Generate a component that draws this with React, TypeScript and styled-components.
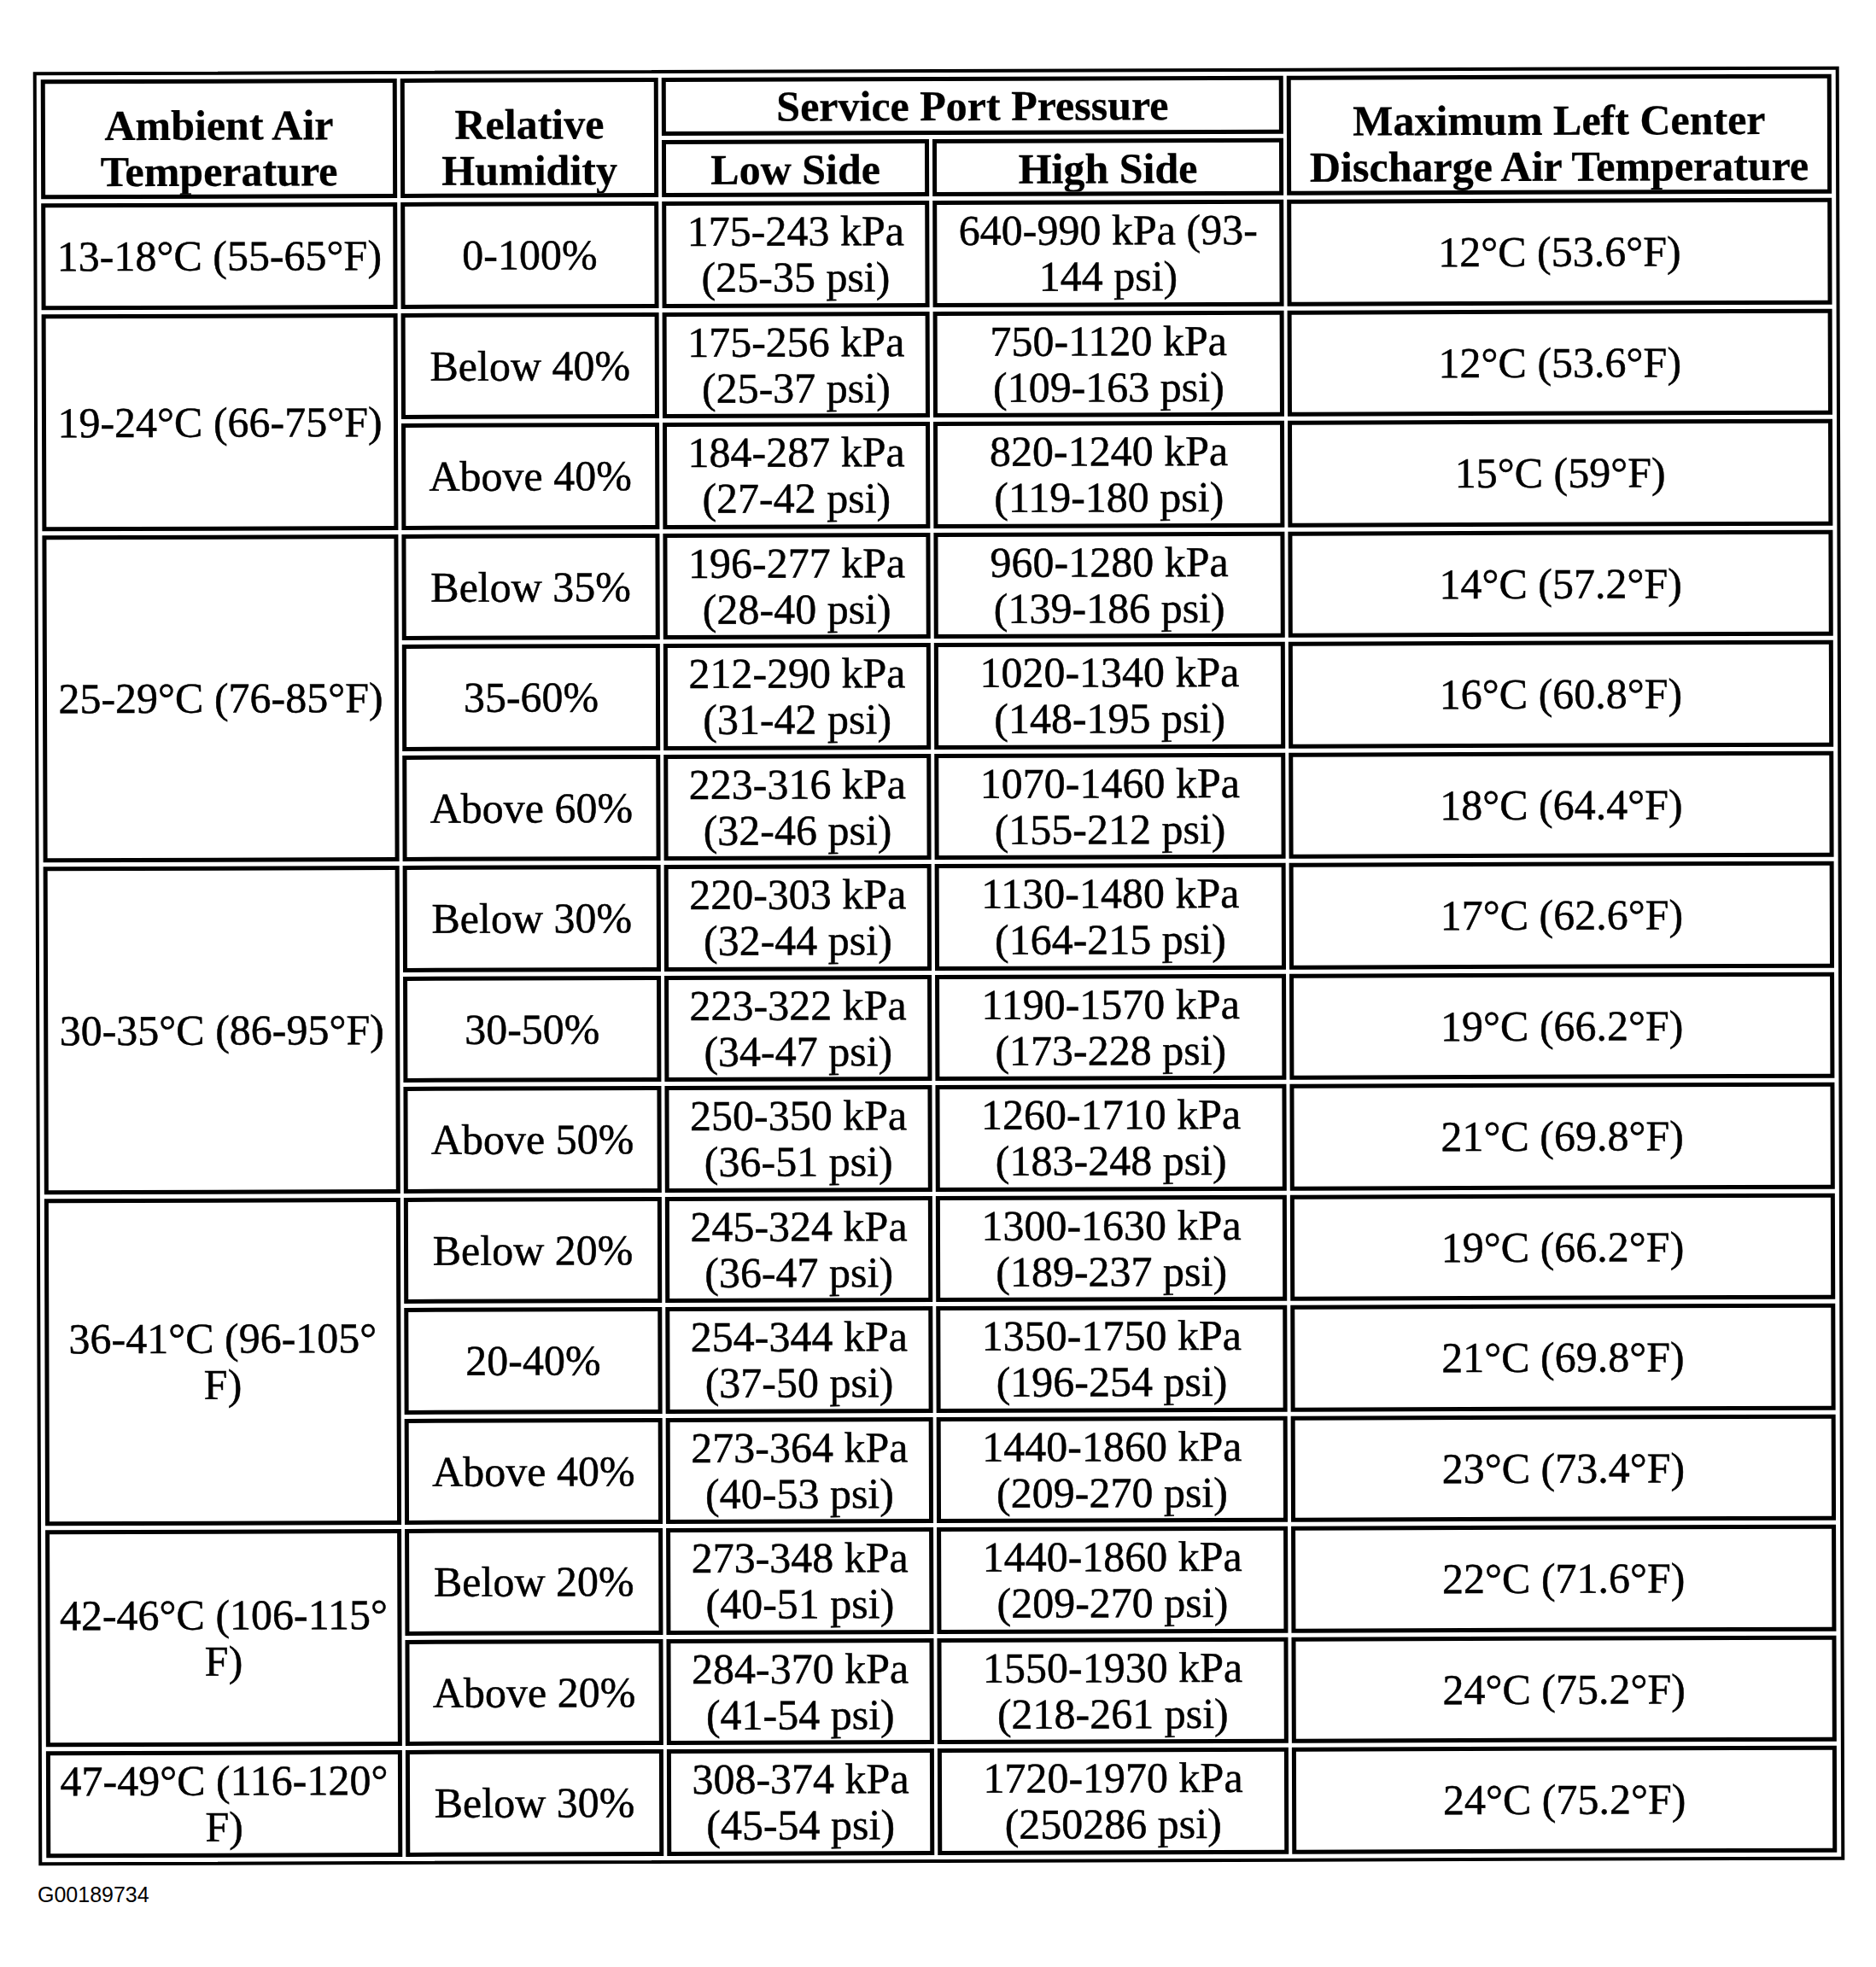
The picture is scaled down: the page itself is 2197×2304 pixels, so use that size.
import React from "react";
import styled, { createGlobalStyle } from "styled-components";

const GlobalStyle = createGlobalStyle`
  html, body {
    margin: 0;
    padding: 0;
    background: #ffffff;
  }
  * {
    box-sizing: border-box;
  }
`;

type DataRow = {
  humidity: string;
  low: string[];
  high: string[];
  max: string;
};

type Group = {
  temp: string[];
  rows: DataRow[];
};

const groups: Group[] = [
  {
    temp: ["13-18°C (55-65°F)"],
    rows: [
      { humidity: "0-100%", low: ["175-243 kPa", "(25-35 psi)"], high: ["640-990 kPa (93-", "144 psi)"], max: "12°C (53.6°F)" },
    ],
  },
  {
    temp: ["19-24°C (66-75°F)"],
    rows: [
      { humidity: "Below 40%", low: ["175-256 kPa", "(25-37 psi)"], high: ["750-1120 kPa", "(109-163 psi)"], max: "12°C (53.6°F)" },
      { humidity: "Above 40%", low: ["184-287 kPa", "(27-42 psi)"], high: ["820-1240 kPa", "(119-180 psi)"], max: "15°C (59°F)" },
    ],
  },
  {
    temp: ["25-29°C (76-85°F)"],
    rows: [
      { humidity: "Below 35%", low: ["196-277 kPa", "(28-40 psi)"], high: ["960-1280 kPa", "(139-186 psi)"], max: "14°C (57.2°F)" },
      { humidity: "35-60%", low: ["212-290 kPa", "(31-42 psi)"], high: ["1020-1340 kPa", "(148-195 psi)"], max: "16°C (60.8°F)" },
      { humidity: "Above 60%", low: ["223-316 kPa", "(32-46 psi)"], high: ["1070-1460 kPa", "(155-212 psi)"], max: "18°C (64.4°F)" },
    ],
  },
  {
    temp: ["30-35°C (86-95°F)"],
    rows: [
      { humidity: "Below 30%", low: ["220-303 kPa", "(32-44 psi)"], high: ["1130-1480 kPa", "(164-215 psi)"], max: "17°C (62.6°F)" },
      { humidity: "30-50%", low: ["223-322 kPa", "(34-47 psi)"], high: ["1190-1570 kPa", "(173-228 psi)"], max: "19°C (66.2°F)" },
      { humidity: "Above 50%", low: ["250-350 kPa", "(36-51 psi)"], high: ["1260-1710 kPa", "(183-248 psi)"], max: "21°C (69.8°F)" },
    ],
  },
  {
    temp: ["36-41°C (96-105°", "F)"],
    rows: [
      { humidity: "Below 20%", low: ["245-324 kPa", "(36-47 psi)"], high: ["1300-1630 kPa", "(189-237 psi)"], max: "19°C (66.2°F)" },
      { humidity: "20-40%", low: ["254-344 kPa", "(37-50 psi)"], high: ["1350-1750 kPa", "(196-254 psi)"], max: "21°C (69.8°F)" },
      { humidity: "Above 40%", low: ["273-364 kPa", "(40-53 psi)"], high: ["1440-1860 kPa", "(209-270 psi)"], max: "23°C (73.4°F)" },
    ],
  },
  {
    temp: ["42-46°C (106-115°", "F)"],
    rows: [
      { humidity: "Below 20%", low: ["273-348 kPa", "(40-51 psi)"], high: ["1440-1860 kPa", "(209-270 psi)"], max: "22°C (71.6°F)" },
      { humidity: "Above 20%", low: ["284-370 kPa", "(41-54 psi)"], high: ["1550-1930 kPa", "(218-261 psi)"], max: "24°C (75.2°F)" },
    ],
  },
  {
    temp: ["47-49°C (116-120°", "F)"],
    rows: [
      { humidity: "Below 30%", low: ["308-374 kPa", "(45-54 psi)"], high: ["1720-1970 kPa", "(250286 psi)"], max: "24°C (75.2°F)" },
    ],
  },
];

const Page = styled.div`
  padding: 81px 0 60px 42px;
  font-family: "Liberation Serif", "Times New Roman", serif;
  color: #000;
`;

// the scanned table leans slightly, so the whole frame is turned a touch
const TableFrame = styled.div`
  width: 2115px;
  border: 4px solid #000;
  padding: 5px;
  transform: rotate(-0.18deg);
  transform-origin: center;
`;

const Grid = styled.div`
  display: grid;
  grid-template-columns: 417px 302px 313px 411px 638px;
  grid-template-rows: 67.5px 67.5px repeat(15, 124.5px);
  column-gap: 4px;
  row-gap: 5px;
`;

const Cell = styled.div<{
  $col: number;
  $row: number;
  $colSpan?: number;
  $rowSpan?: number;
  $head?: boolean;
  $drop?: number;
}>`
  grid-column: ${(p) => p.$col} / span ${(p) => p.$colSpan ?? 1};
  grid-row: ${(p) => p.$row} / span ${(p) => p.$rowSpan ?? 1};
  border: 5px solid #000;
  padding-top: ${(p) => p.$drop ?? 0}px;
  display: flex;
  flex-direction: column;
  align-items: center;
  justify-content: center;
  text-align: center;
  font-size: 50px;
  line-height: 54px;
  font-weight: ${(p) => (p.$head ? 700 : 400)};
  -webkit-text-stroke: ${(p) => (p.$head ? "0.3px" : "0.5px")} #000;
  white-space: nowrap;
  overflow: hidden;
`;

const Line = styled.span`
  display: block;
`;

const Caption = styled.div`
  margin-top: 25px;
  font-family: "Liberation Sans", Arial, sans-serif;
  font-size: 25px;
  line-height: 25px;
  padding-left: 2px;
`;

const Lines = ({ items }: { items: string[] }) => (
  <>
    {items.map((t, i) => (
      <Line key={i}>{t}</Line>
    ))}
  </>
);

const App = () => {
  let rowIndex = 3;
  const body: React.ReactNode[] = [];

  groups.forEach((g, gi) => {
    const start = rowIndex;
    body.push(
      <Cell key={`t${gi}`} $col={1} $row={start} $rowSpan={g.rows.length}>
        <Lines items={g.temp} />
      </Cell>
    );
    g.rows.forEach((r, ri) => {
      const row = start + ri;
      body.push(
        <Cell key={`h${gi}-${ri}`} $col={2} $row={row}>
          {r.humidity}
        </Cell>,
        <Cell key={`l${gi}-${ri}`} $col={3} $row={row}>
          <Lines items={r.low} />
        </Cell>,
        <Cell key={`p${gi}-${ri}`} $col={4} $row={row}>
          <Lines items={r.high} />
        </Cell>,
        <Cell key={`m${gi}-${ri}`} $col={5} $row={row}>
          {r.max}
        </Cell>
      );
    });
    rowIndex += g.rows.length;
  });

  return (
    <>
      <GlobalStyle />
      <Page>
        <TableFrame>
          <Grid>
            <Cell $head $col={1} $row={1} $rowSpan={2} $drop={22}>
              <Lines items={["Ambient Air", "Temperature"]} />
            </Cell>
            <Cell $head $col={2} $row={1} $rowSpan={2} $drop={22}>
              <Lines items={["Relative", "Humidity"]} />
            </Cell>
            <Cell $head $col={3} $row={1} $colSpan={2}>
              Service Port Pressure
            </Cell>
            <Cell $head $col={3} $row={2} $drop={4}>
              Low Side
            </Cell>
            <Cell $head $col={4} $row={2} $drop={4}>
              High Side
            </Cell>
            <Cell $head $col={5} $row={1} $rowSpan={2} $drop={20}>
              <Lines items={["Maximum Left Center", "Discharge Air Temperature"]} />
            </Cell>
            {body}
          </Grid>
        </TableFrame>
        <Caption>G00189734</Caption>
      </Page>
    </>
  );
};

export default App;
